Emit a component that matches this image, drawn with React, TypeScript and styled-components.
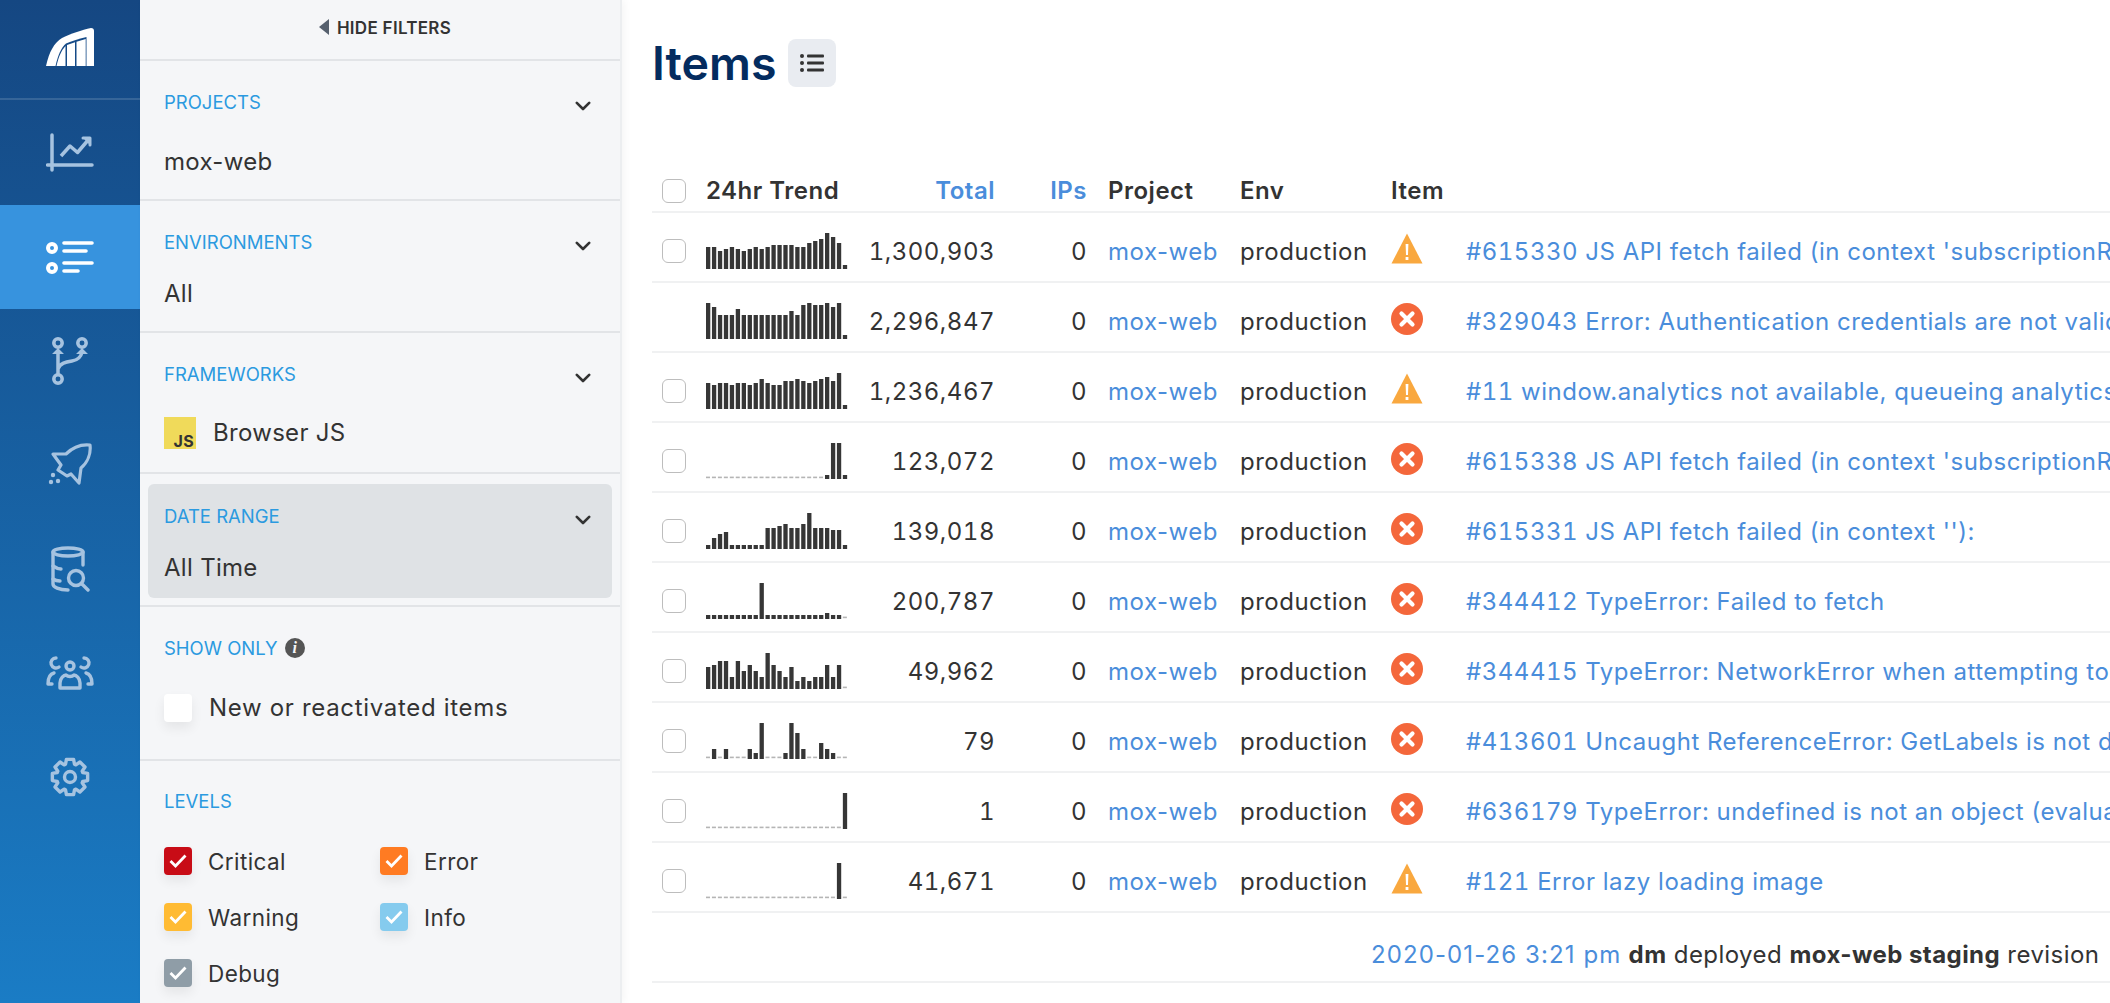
import React from "react";
import styled, { createGlobalStyle } from "styled-components";

const GlobalStyle = createGlobalStyle`
  html, body {
    margin: 0;
    height: 1003px;
    overflow: hidden;
    background: #fff;
    font-family: Inter, "Liberation Sans", sans-serif;
    color: #333;
  }
  * { box-sizing: border-box; }
`;

const Page = styled.div`
  display: flex;
  width: 2110px;
  height: 1003px;
  overflow: hidden;
`;

/* ---------- nav rail ---------- */

const Rail = styled.nav`
  flex: 0 0 140px;
  background: linear-gradient(180deg, #154782 0%, #1a7cc5 100%);
`;

const LogoBox = styled.div`
  height: 100px;
  display: flex;
  align-items: flex-start;
  justify-content: center;
  padding-top: 28px;
  border-bottom: 2px solid rgba(255, 255, 255, 0.14);
`;

const NavItem = styled.div<{ $active?: boolean; $first?: boolean }>`
  height: ${(p) => (p.$first ? "105px" : "104px")};
  display: flex;
  align-items: center;
  justify-content: center;
  background: ${(p) => (p.$active ? "#3793de" : "transparent")};
  color: ${(p) => (p.$active ? "#fff" : "#a6c3e0")};
`;

const gearPath = () => {
  const cx = 24;
  const cy = 24;
  const pts: string[] = [];
  for (let i = 0; i < 8; i++) {
    const a = (i * Math.PI) / 4 - Math.PI / 2;
    const s = 0.2;
    const w = 0.14;
    const at = (r: number, t: number) =>
      `${(cx + r * Math.cos(t)).toFixed(2)} ${(cy + r * Math.sin(t)).toFixed(2)}`;
    pts.push(at(13.5, a - s - w), at(18, a - s), at(18, a + s), at(13.5, a + s + w));
  }
  return `M${pts.join("L")}Z`;
};

const Logo = () => (
  <svg width="48" height="38" viewBox="0 0 48 38">
    <path
      d="M0 38C3 24 8 15 16 10C24 6 36 2 45 0C47 0 48 1 48 3V38Z"
      fill="#fff"
    />
    <path d="M9.5 38C12 27 15 20 20 15.5C27 12.5 34 10.5 40.5 9V38Z" fill="#154a87" />
    <path d="M10.5 38C13 28 15 23 19.5 18V38ZM21 17L29 14.2V38H21ZM30.5 13.7L39.7 11V38H30.5Z" fill="#fff" />
  </svg>
);

const ChartIcon = () => (
  <svg width="48" height="40" viewBox="0 0 48 40" fill="none" stroke="currentColor" strokeWidth="3.5" strokeLinecap="round" strokeLinejoin="round">
    <path d="M6 2V37" />
    <path d="M1.5 32H46" />
    <path d="M15 23L24 13L31.5 19.5L43 6" strokeLinecap="butt" />
    <path d="M37 5H44V12" strokeWidth="3" fill="currentColor" />
  </svg>
);

const ListIcon = () => (
  <svg width="48" height="36" viewBox="0 0 48 36" fill="none" stroke="currentColor" strokeWidth="3.6" strokeLinecap="round">
    <circle cx="6" cy="9" r="4" strokeWidth="4" />
    <circle cx="6" cy="29" r="4" strokeWidth="4" />
    <path d="M18 4H46M18 12H40M18 24H46M18 32H32" />
  </svg>
);

const BranchIcon = () => (
  <svg width="48" height="50" viewBox="0 0 48 50" fill="none" stroke="currentColor" strokeWidth="3.5">
    <circle cx="12" cy="7" r="4.2" />
    <circle cx="36" cy="7" r="4.2" />
    <circle cx="12" cy="43" r="4.2" />
    <path d="M12 39V17M12 33C14 27 20 26 26 25C32 24 35 21 36 16" />
    <path d="M6 18L12 12L18 18ZM30 18L36 12L42 18Z" fill="currentColor" strokeWidth="0" />
  </svg>
);

const RocketIcon = () => (
  <svg width="48" height="44" viewBox="0 0 48 44" fill="none" stroke="currentColor" strokeWidth="3.2" strokeLinejoin="round">
    <path d="M44 2C35 1 27 4 20 11L7 11L15 22L12 27L21 33L25 31L33 40L35 25C42 19 45 10 44 2Z" />
    <circle cx="5" cy="39" r="2.2" fill="currentColor" stroke="none" />
    <circle cx="12" cy="38" r="2.2" fill="currentColor" stroke="none" />
    <circle cx="7" cy="32" r="2.2" fill="currentColor" stroke="none" />
  </svg>
);

const DataIcon = () => (
  <svg width="48" height="46" viewBox="0 0 48 46" fill="none" stroke="currentColor" strokeWidth="3.4" strokeLinecap="round">
    <ellipse cx="22" cy="6" rx="15" ry="4" />
    <path d="M7 6V38C7 41 13 44 22 44M37 6V19" />
    <path d="M7 20C10 22 13 23 15 23M7 33C10 35 12 35 14 35" />
    <circle cx="30" cy="32" r="7.5" />
    <path d="M36 38L42 44" />
  </svg>
);

const TeamIcon = () => (
  <svg width="48" height="36" viewBox="0 0 48 36" fill="none" stroke="currentColor" strokeWidth="3.4" strokeLinecap="round" strokeLinejoin="round">
    <circle cx="24" cy="11" r="4" />
    <path d="M14 33V28C14 23 18 20 20 20C22 22 26 22 28 20C30 20 34 23 34 28V33Z" />
    <path d="M13 12A5 5 0 1 1 10 3M35 12A5 5 0 1 0 38 3" />
    <path d="M8 18C4 19 2 23 2 29H6M40 18C44 19 46 23 46 29H42" />
  </svg>
);

const GearIcon = () => (
  <svg width="48" height="48" viewBox="0 0 48 48" fill="none" stroke="currentColor" strokeWidth="3.4" strokeLinejoin="round">
    <path d={gearPath()} />
    <circle cx="24" cy="24" r="5.5" />
  </svg>
);

/* ---------- filters panel ---------- */

const Panel = styled.aside`
  flex: 0 0 482px;
  background: #f5f6f8;
  border-right: 2px solid #eceef0;
  box-shadow: 3px 0 8px rgba(0, 0, 0, 0.04);
`;

const HideBar = styled.div`
  height: 61px;
  display: flex;
  align-items: flex-start;
  justify-content: center;
  gap: 8px;
  padding: 19px 0 0 10px;
  border-bottom: 2px solid #e2e4e7;
  font-size: 17px;
  font-weight: 600;
  letter-spacing: 0.3px;
  line-height: 19px;
`;

const Section = styled.section<{ $height: number }>`
  display: flow-root;
  height: ${(p) => p.$height}px;
  padding: 0 24px;
  border-bottom: 2px solid #e2e4e7;
`;

const SectionHead = styled.div<{ $top: number }>`
  display: flex;
  align-items: center;
  justify-content: space-between;
  padding-top: ${(p) => p.$top}px;
  height: ${(p) => p.$top + 24}px;
`;

const Label = styled.span`
  display: flex;
  align-items: center;
  gap: 7px;
  font-size: 18.5px;
  color: #2b9ae0;
  line-height: 24px;
`;

const Value = styled.div<{ $top: number }>`
  display: flex;
  align-items: center;
  gap: 17px;
  padding-top: ${(p) => p.$top}px;
  font-size: 24px;
  line-height: 32px;
  letter-spacing: 0.3px;
  color: #333;
`;

const Chevron = () => (
  <svg width="16" height="10" viewBox="0 0 16 10" fill="none" stroke="#333" strokeWidth="2.6" strokeLinecap="round" strokeLinejoin="round" style={{ marginRight: 5, marginTop: 8 }}>
    <path d="M1.8 1.8L8 8L14.2 1.8" />
  </svg>
);

const JsBadge = styled.span`
  width: 32px;
  height: 32px;
  background: #f0da5a;
  display: flex;
  align-items: flex-end;
  justify-content: flex-end;
  font-size: 16px;
  font-weight: 700;
  line-height: 16px;
  padding: 0 2px 0 0;
`;

const DateBox = styled.div`
  height: 114px;
  margin: 10px -16px 0;
  padding: 0 16px;
  background: #dfe2e5;
  border-radius: 6px;
`;

const CheckRow = styled.div<{ $large?: boolean; $top?: number }>`
  display: flex;
  align-items: center;
  gap: ${(p) => (p.$large ? "17px" : "16px")};
  padding-top: ${(p) => p.$top || 0}px;
  font-size: ${(p) => (p.$large ? "24px" : "22.5px")};
  letter-spacing: ${(p) => (p.$large ? "0.68px" : "0.4px")};
  color: #333;
`;

const Box = styled.span<{ $color: string }>`
  flex: 0 0 28px;
  width: 28px;
  height: 28px;
  border-radius: 4px;
  background: ${(p) => p.$color};
  box-shadow: 0 6px 12px rgba(0, 0, 0, 0.07);
  display: flex;
  align-items: center;
  justify-content: center;
`;

const Levels = styled.div`
  display: grid;
  grid-template-columns: 216px 1fr;
  grid-auto-rows: 56px;
  padding-top: 20px;
`;

const InfoDot = styled.span`
  width: 20px;
  height: 20px;
  border-radius: 50%;
  background: #555;
  color: #f5f6f8;
  display: flex;
  align-items: center;
  justify-content: center;
  font-family: "Liberation Serif", serif;
  font-style: italic;
  font-weight: 700;
  font-size: 16px;
`;

const Tick = () => (
  <svg width="20" height="16" viewBox="0 0 20 16" fill="none" stroke="#fff" strokeWidth="2.8">
    <path d="M2.5 8L7.5 13L17.5 2.5" />
  </svg>
);

const levels = [
  { name: "Critical", color: "#c80c16" },
  { name: "Error", color: "#ff7b22" },
  { name: "Warning", color: "#ffbb33" },
  { name: "Info", color: "#85cbee" },
  { name: "Debug", color: "#8f9da7" },
];

/* ---------- main table ---------- */

const Main = styled.main`
  flex: 1;
  min-width: 0;
  padding-left: 30px;
`;

const TitleBar = styled.div`
  height: 143px;
  display: flex;
  align-items: flex-start;
  gap: 12px;
  padding: 39px 0 0 0;
`;

const Title = styled.h1`
  margin: 0;
  font-size: 46.5px;
  line-height: 48px;
  font-weight: 600;
  color: #042c5f;
`;

const ViewButton = styled.div`
  width: 48px;
  height: 48px;
  border-radius: 8px;
  background: #e9ecf1;
  display: flex;
  align-items: center;
  justify-content: center;
`;

const columns = "24px 162px 147px 92px 132px 151px 75px 1fr";

const Row = styled.div<{ $head?: boolean }>`
  display: grid;
  grid-template-columns: ${columns};
  align-items: center;
  height: 70px;
  padding: ${(p) => (p.$head ? "27px" : "8px")} 0 0 10px;
  border-bottom: 2px solid #f0f1f2;
  font-size: 24px;
  letter-spacing: 0.5px;
  white-space: nowrap;
  font-weight: ${(p) => (p.$head ? 600 : 400)};
`;

const Check = styled.span`
  display: block;
  width: 24px;
  height: 24px;
  border: 1.5px solid #bdbdbd;
  border-radius: 6px;
  background: #fff;
`;

const Spark = styled.svg`
  margin-left: 20px;
  display: block;
`;

const Num = styled.span<{ $blue?: boolean }>`
  text-align: right;
  font-variant-numeric: tabular-nums;
  color: ${(p) => (p.$blue ? "#4a8ddb" : "#333")};
`;

const Cell = styled.span<{ $left: number }>`
  padding-left: ${(p) => p.$left}px;
`;

const ProjectLink = styled(Cell)`
  color: #4a8ddb;
`;

const LevelIcon = styled.span`
  display: block;
  height: 32px;
  margin-bottom: 4px;
`;

const ItemTitle = styled.span`
  color: #4a8ddb;
  padding-left: 21px;
  overflow: hidden;
`;

const ItemId = styled.span`
  font-variant-numeric: tabular-nums;
`;

const DeployRow = styled.div`
  height: 70px;
  padding: 27px 0 0 719px;
  border-bottom: 2px solid #f0f1f2;
  font-size: 24px;
  line-height: 30px;
  letter-spacing: 0.45px;
  white-space: nowrap;
  overflow: hidden;
`;

const DeployDate = styled.span`
  color: #4a8ddb;
  letter-spacing: 1.1px;
`;

const Warn = () => (
  <LevelIcon>
    <svg width="32" height="32" viewBox="0 0 32 32">
      <path d="M16 0.5L31.5 30.5H0.5Z" fill="#f9a83f" strokeLinejoin="round" />
      <path d="M14.6 11H17.4L17 22H15ZM14.6 24H17.4V27H14.6Z" fill="#fff" />
    </svg>
  </LevelIcon>
);

const Err = () => (
  <LevelIcon>
    <svg width="32" height="32" viewBox="0 0 32 32">
      <circle cx="16" cy="16" r="16" fill="#f4673b" />
      <path d="M10.5 10.5L21.5 21.5M21.5 10.5L10.5 21.5" stroke="#fff" strokeWidth="4.2" strokeLinecap="round" />
    </svg>
  </LevelIcon>
);

const Sparkline = ({ bars }: { bars: number[] }) => (
  <Spark width="142" height="36" viewBox="0 0 142 36">
    {bars.map((h, i) =>
      h === 0 ? (
        <rect key={i} x={i * 5.95} y={33.6} width={4} height={1.6} fill="#b5b5b5" />
      ) : (
        <rect key={i} x={i * 5.95} y={36 - h} width={4.3} height={h} fill="#363636" />
      )
    )}
  </Spark>
);

const z = (n: number) => Array<number>(n).fill(0);

const rows = [
  {
    bars: [22, 22, 18, 20, 22, 20, 18, 20, 22, 20, 22, 24, 24, 24, 24, 22, 22, 26, 28, 30, 36, 32, 26, 4],
    total: "1,300,903",
    warn: true,
    id: "#615330",
    title: "JS API fetch failed (in context 'subscriptionRequest'):",
    check: true,
  },
  {
    bars: [36, 32, 24, 24, 24, 30, 24, 24, 24, 24, 24, 24, 24, 24, 28, 24, 34, 36, 34, 34, 36, 32, 36, 4],
    total: "2,296,847",
    warn: false,
    id: "#329043",
    title: "Error: Authentication credentials are not valid",
    check: false,
  },
  {
    bars: [26, 24, 26, 26, 24, 26, 26, 24, 26, 30, 26, 24, 24, 28, 28, 30, 28, 26, 28, 30, 32, 28, 36, 4],
    total: "1,236,467",
    warn: true,
    id: "#11",
    title: "window.analytics not available, queueing analytics",
    check: true,
  },
  {
    bars: [...z(20), 4, 36, 36, 4],
    total: "123,072",
    warn: false,
    id: "#615338",
    title: "JS API fetch failed (in context 'subscriptionRequest'):",
    check: true,
  },
  {
    bars: [4, 11, 15, 17, 4, 4, 4, 4, 4, 4, 21, 21, 23, 25, 21, 21, 25, 36, 21, 21, 21, 19, 19, 4],
    total: "139,018",
    warn: false,
    id: "#615331",
    title: "JS API fetch failed (in context ''):",
    check: true,
  },
  {
    bars: [4, 4, 4, 4, 4, 4, 4, 4, 4, 36, 4, 4, 4, 4, 4, 4, 4, 4, 4, 4, 6, 4, 4, 0],
    total: "200,787",
    warn: false,
    id: "#344412",
    title: "TypeError: Failed to fetch",
    check: true,
  },
  {
    bars: [22, 24, 28, 28, 12, 28, 18, 24, 18, 12, 36, 24, 18, 12, 22, 8, 12, 8, 12, 12, 24, 12, 24, 0],
    total: "49,962",
    warn: false,
    id: "#344415",
    title: "TypeError: NetworkError when attempting to fetch",
    check: true,
  },
  {
    bars: [0, 10, 0, 10, 0, 0, 0, 10, 6, 36, 0, 0, 0, 6, 36, 26, 10, 0, 0, 16, 10, 6, 0, 0],
    total: "79",
    warn: false,
    id: "#413601",
    title: "Uncaught ReferenceError: GetLabels is not defined",
    check: true,
  },
  {
    bars: [...z(23), 36],
    total: "1",
    warn: false,
    id: "#636179",
    title: "TypeError: undefined is not an object (evaluating",
    check: true,
  },
  {
    bars: [...z(22), 36, 0],
    total: "41,671",
    warn: true,
    id: "#121",
    title: "Error lazy loading image",
    check: true,
  },
];

export default function App() {
  return (
    <Page>
      <GlobalStyle />
      <Rail>
        <LogoBox>
          <Logo />
        </LogoBox>
        <NavItem $first>
          <ChartIcon />
        </NavItem>
        <NavItem $active>
          <ListIcon />
        </NavItem>
        <NavItem>
          <BranchIcon />
        </NavItem>
        <NavItem>
          <RocketIcon />
        </NavItem>
        <NavItem>
          <DataIcon />
        </NavItem>
        <NavItem>
          <TeamIcon />
        </NavItem>
        <NavItem>
          <GearIcon />
        </NavItem>
      </Rail>

      <Panel>
        <HideBar>
          <svg width="10" height="16" viewBox="0 0 10 16">
            <path d="M10 0V16L0 8Z" fill="#56606e" />
          </svg>
          HIDE FILTERS
        </HideBar>
        <Section $height={140}>
          <SectionHead $top={29}>
            <Label>PROJECTS</Label>
            <Chevron />
          </SectionHead>
          <Value $top={32}>mox-web</Value>
        </Section>
        <Section $height={132}>
          <SectionHead $top={29}>
            <Label>ENVIRONMENTS</Label>
            <Chevron />
          </SectionHead>
          <Value $top={24}>All</Value>
        </Section>
        <Section $height={141}>
          <SectionHead $top={29}>
            <Label>FRAMEWORKS</Label>
            <Chevron />
          </SectionHead>
          <Value $top={31}>
            <JsBadge>JS</JsBadge>
            Browser JS
          </Value>
        </Section>
        <Section $height={133}>
          <DateBox>
            <SectionHead $top={20}>
              <Label>DATE RANGE</Label>
              <Chevron />
            </SectionHead>
            <Value $top={24}>All Time</Value>
          </DateBox>
        </Section>
        <Section $height={154}>
          <SectionHead $top={29}>
            <Label>
              SHOW ONLY
              <InfoDot>i</InfoDot>
            </Label>
          </SectionHead>
          <CheckRow $large $top={33}>
            <Box $color="#fff" />
            New or reactivated items
          </CheckRow>
        </Section>
        <Section $height={300}>
          <SectionHead $top={28}>
            <Label>LEVELS</Label>
          </SectionHead>
          <Levels>
            {levels.map((l) => (
              <CheckRow key={l.name}>
                <Box $color={l.color}>
                  <Tick />
                </Box>
                {l.name}
              </CheckRow>
            ))}
          </Levels>
        </Section>
      </Panel>

      <Main>
        <TitleBar>
          <Title>Items</Title>
          <ViewButton>
            <svg width="24" height="20" viewBox="0 0 24 20" fill="#333">
              <circle cx="2" cy="3" r="2" />
              <circle cx="2" cy="10" r="2" />
              <circle cx="2" cy="17" r="2" />
              <rect x="7" y="1.5" width="17" height="3" rx="1" />
              <rect x="7" y="8.5" width="17" height="3" rx="1" />
              <rect x="7" y="15.5" width="17" height="3" rx="1" />
            </svg>
          </ViewButton>
        </TitleBar>
        <Row $head>
          <Check />
          <Cell $left={20}>24hr Trend</Cell>
          <Num $blue>Total</Num>
          <Num $blue>IPs</Num>
          <Cell $left={21}>Project</Cell>
          <Cell $left={21}>Env</Cell>
          <Cell $left={21}>Item</Cell>
          <span />
        </Row>
        {rows.map((r) => (
          <Row key={r.id}>
            {r.check ? <Check /> : <span />}
            <Sparkline bars={r.bars} />
            <Num>{r.total}</Num>
            <Num>0</Num>
            <ProjectLink $left={21}>mox-web</ProjectLink>
            <Cell $left={21}>production</Cell>
            <Cell $left={21}>{r.warn ? <Warn /> : <Err />}</Cell>
            <ItemTitle>
              <ItemId>{r.id}</ItemId> {r.title}
            </ItemTitle>
          </Row>
        ))}
        <DeployRow>
          <DeployDate>2020-01-26 3:21 pm</DeployDate> <b>dm</b> deployed <b>mox-web staging</b> revision
        </DeployRow>
      </Main>
    </Page>
  );
}
